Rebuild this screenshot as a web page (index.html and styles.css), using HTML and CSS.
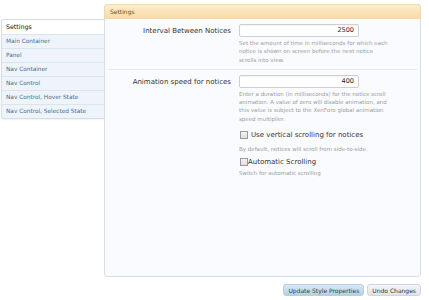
FILE: index.html
```html
<!DOCTYPE html>
<html>
<head>
<meta charset="utf-8">
<link rel="stylesheet" href="styles.css">
</head>
<body>
<div class="page">
  <nav class="sidebar">
    <div class="side-head">Settings</div>
    <a class="side-item">Main Container</a>
    <a class="side-item">Panel</a>
    <a class="side-item">Nav Container</a>
    <a class="side-item">Nav Control</a>
    <a class="side-item">Nav Control, Hover State</a>
    <a class="side-item">Nav Control, Selected State</a>
  </nav>
  <main class="main">
    <section class="panel">
      <div class="panel-head">Settings</div>
      <div class="row">
        <div class="label">Interval Between Notices</div>
        <div class="field">
          <div class="input">2500</div>
          <p class="desc">Set the amount of time in milliseconds for which each notice is shown on screen before the next notice scrolls into view.</p>
        </div>
      </div>
      <div class="sep"></div>
      <div class="row row2">
        <div class="label">Animation speed for notices</div>
        <div class="field">
          <div class="input">400</div>
          <p class="desc">Enter a duration (in milliseconds) for the notice scroll animation. A value of zero will disable animation, and this value is subject to the XenForo global animation speed multiplier.</p>
          <div class="check"><span class="box"></span><span class="check-label spaced">Use vertical scrolling for notices</span></div>
          <p class="desc desc-check">By default, notices will scroll from side-to-side.</p>
          <div class="check check2"><span class="box"></span><span class="check-label">Automatic Scrolling</span></div>
          <p class="desc desc-check2">Switch for automatic scrolling</p>
        </div>
      </div>
    </section>
    <div class="buttons">
      <button class="btn primary">Update Style Properties</button>
      <button class="btn">Undo Changes</button>
    </div>
  </main>
</div>
</body>
</html>
```
FILE: styles.css
```css
html, body {
  margin: 0;
  padding: 0;
  background: #ffffff;
}
body {
  font-family: "DejaVu Sans", Verdana, sans-serif;
  color: #222;
}
.page {
  display: flex;
  align-items: flex-start;
  padding: 4px 0 0 1px;
}
.sidebar {
  width: 102px;
  margin-top: 15px;
  border: 1px solid #d3dee9;
  border-right: none;
  border-radius: 3px 0 0 3px;
  background: #eef4fa;
  display: flex;
  flex-direction: column;
  box-shadow: 0 1px 2px rgba(0,0,0,0.06);
}
.side-head {
  height: 14px;
  line-height: 14px;
  padding-left: 4px;
  background: #fff;
  font-size: 6.3px;
  color: #111;
  border-radius: 3px 0 0 0;
}
.side-item {
  height: 13px;
  line-height: 13px;
  padding-left: 4px;
  border-top: 1px solid #dbe5ee;
  font-size: 5.8px;
  color: #4a6c92;
  white-space: nowrap;
}
.main {
  width: 317px;
  display: flex;
  flex-direction: column;
}
.panel {
  border: 1px solid #d6e0ea;
  border-radius: 3px;
  background: #fafbfe;
  box-sizing: border-box;
  height: 273px;
}
.panel-head {
  height: 13px;
  line-height: 13px;
  padding-left: 5px;
  font-size: 6px;
  color: #6e4c22;
  background: linear-gradient(#fcecd0, #f8dba6);
  border: 1px solid #f0d9b0;
  border-radius: 3px 3px 0 0;
  margin: -1px -1px 0 -1px;
}
.row {
  display: grid;
  grid-template-columns: 126px 1fr;
  column-gap: 8px;
  padding-top: 5px;
}
.label {
  text-align: right;
  font-size: 7px;
  color: #333;
  padding-top: 3px;
}
.input {
  width: 120px;
  height: 13px;
  box-sizing: border-box;
  border: 1px solid #cfcfcf;
  border-radius: 2px;
  background: #fff;
  box-shadow: inset 0 1px 1px rgba(0,0,0,0.05);
  text-align: right;
  font-size: 6.5px;
  line-height: 11px;
  padding-right: 4px;
  color: #222;
}
.desc {
  margin: 2px 0 0 0;
  font-size: 5.5px;
  line-height: 8.3px;
  color: #9c9c9c;
  width: 152px;
}
.sep {
  height: 1px;
  background: #e6e9ee;
  margin: 5px 3px 0 3px;
}
.check {
  display: flex;
  align-items: center;
  margin-top: 7.5px;
  padding-left: 1px;
}
.check2 {
  margin-top: 4.5px;
}
.box {
  width: 6px;
  height: 6px;
  border: 1px solid #9a9a9a;
  background: linear-gradient(#f2f2f2, #e0e0e0);
  flex: none;
}
.check-label {
  font-size: 7px;
  color: #333;
}
.spaced {
  margin-left: 3px;
}
.desc-check {
  margin-top: 6.5px;
}
.desc-check2 {
  margin-top: 3.5px;
}
.buttons {
  display: flex;
  justify-content: flex-end;
  gap: 3px;
  margin-top: 7px;
}
.btn {
  height: 12px;
  padding: 0 4px;
  font-family: "DejaVu Sans", Verdana, sans-serif;
  font-size: 6px;
  color: #333;
  border: 1px solid #d0d6dd;
  border-radius: 3px;
  background: linear-gradient(#f4f6f9, #dfe4ea);
}
.btn.primary {
  color: #2c3f55;
  background: linear-gradient(#d9e9f5, #b4d0e6);
  border-color: #b7cde0;
}
```
